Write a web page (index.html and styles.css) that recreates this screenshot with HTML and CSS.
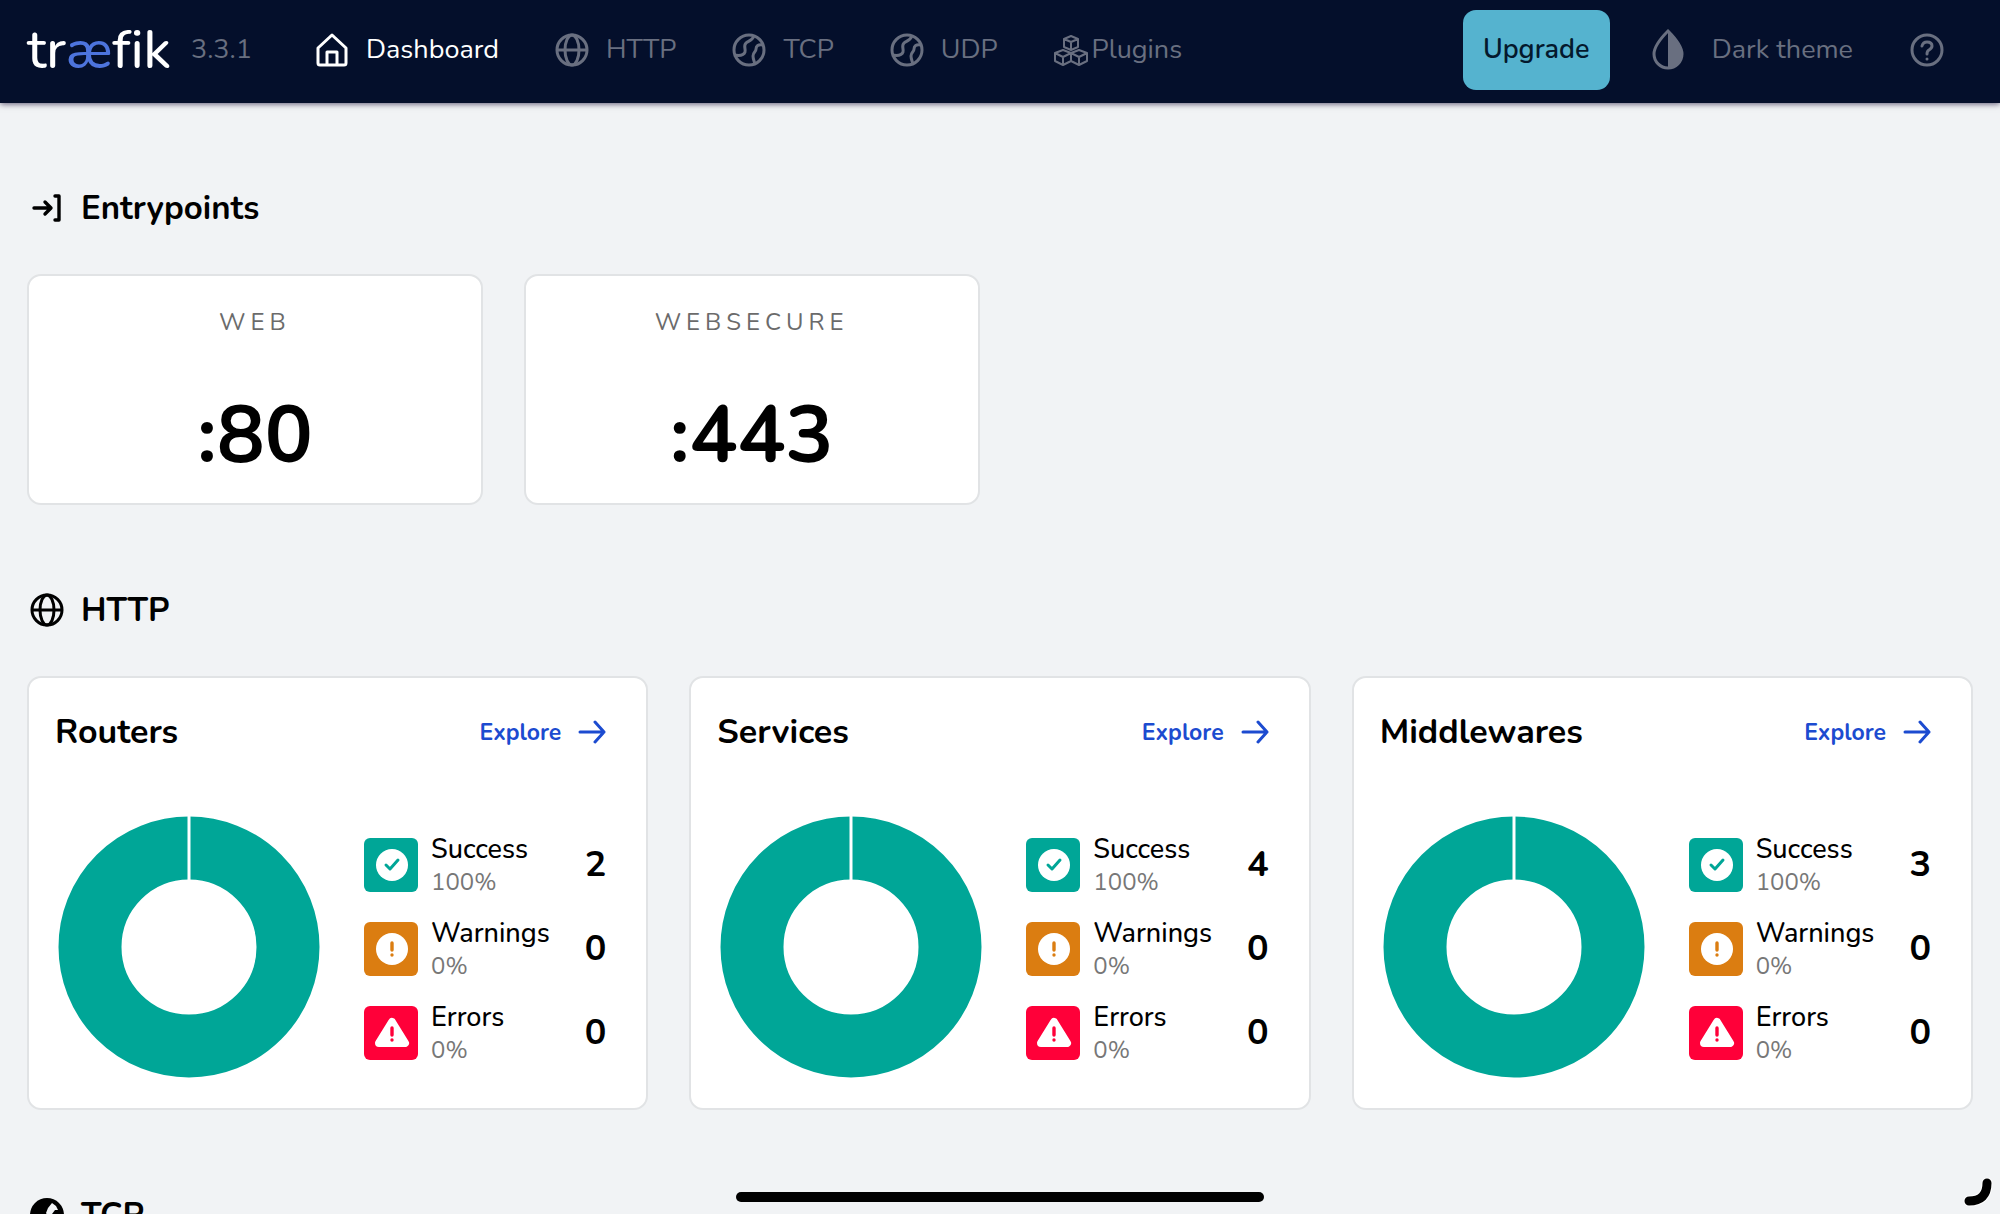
FILE: index.html
```html
<!DOCTYPE html>
<html lang="en">
<head>
<meta charset="utf-8">
<title>Traefik</title>
<link rel="stylesheet" href="styles.css">
</head>
<body>
<svg class="sprite" aria-hidden="true">
  <symbol id="globe" viewBox="0 0 34 34"><g fill="none" stroke="currentColor" stroke-width="3"><circle cx="17" cy="17" r="15"/><ellipse cx="17" cy="17" rx="7" ry="15"/><path d="M2 17H32"/></g></symbol>
  <symbol id="earth" viewBox="0 0 34 34"><g fill="none" stroke="currentColor" stroke-width="3" stroke-linejoin="round"><circle cx="17" cy="17" r="15"/><path d="M2 22C8 23 12 22 13 19C14 16 11 13 14 10C16 8 20 8 22 3M31 12C26 11 24 13 24 16C24 19 21 19 21 23C21 26 22 28 23 31"/></g></symbol>
  <symbol id="earth-solid" viewBox="0 0 34 34"><circle cx="17" cy="17" r="17" fill="currentColor"/><path d="M22 5L26 8L28 12H25L22 16L19 20L16 15L18 10Z" fill="#f1f3f5"/></symbol>
  <symbol id="arrow" viewBox="0 0 28 24"><path d="M2 12H26M17 2L26 12L17 22" fill="none" stroke="currentColor" stroke-width="3" stroke-linecap="round" stroke-linejoin="round"/></symbol>
  <symbol id="check" viewBox="0 0 54 54"><circle cx="28" cy="27" r="16" fill="#fff"/><path d="M22 27L26 31L34 22" fill="none" stroke="currentColor" stroke-width="3" stroke-linecap="round" stroke-linejoin="round"/></symbol>
  <symbol id="warn" viewBox="0 0 54 54"><circle cx="28" cy="27" r="16" fill="#fff"/><path d="M28 21V28M28 33V33.1" fill="none" stroke="currentColor" stroke-width="3.4" stroke-linecap="round"/></symbol>
  <symbol id="error" viewBox="0 0 54 54"><path d="M28 16L41 37H15Z" fill="#fff" stroke="#fff" stroke-width="8" stroke-linejoin="round"/><path d="M28 22V29M28 34V34.1" fill="none" stroke="currentColor" stroke-width="3.4" stroke-linecap="round"/></symbol>
</svg>
<header class="topbar">
  <a class="logo" href="#">tr<span class="logo-ae">æ</span>fik</a>
  <span class="version">3.3.1</span>
  <nav class="nav">
    <a class="nav-link active" href="#"><svg width="34" height="34" viewBox="0 0 34 34" fill="none" stroke="currentColor" stroke-width="3" stroke-linejoin="round"><path d="M3 15L17 2L31 15V30Q31 32 29 32H5Q3 32 3 30ZM12 32V19H22V32"/></svg>Dashboard</a>
    <a class="nav-link" href="#"><svg width="34" height="34"><use href="#globe"/></svg>HTTP</a>
    <a class="nav-link" href="#"><svg width="34" height="34"><use href="#earth"/></svg>TCP</a>
    <a class="nav-link" href="#"><svg width="34" height="34"><use href="#earth"/></svg>UDP</a>
    <a class="nav-link plugins" href="#"><svg width="34" height="34" viewBox="0 0 34 34" fill="none" stroke="currentColor" stroke-width="2" stroke-linejoin="round"><path d="M17 3L24 6V14L17 17L10 14V6ZM10 6L17 9L24 6M17 9V17M9 17L17 20V28L9 32L1 28V20ZM1 20L9 24L17 20M9 24V32M25 17L33 20V28L25 32L17 28V20ZM17 20L25 24L33 20M25 24V32"/></svg>Plugins</a>
  </nav>
  <button class="upgrade" type="button">Upgrade</button>
  <button class="theme" type="button"><svg width="32" height="44" viewBox="0 0 32 44"><path d="M16 3Q30 17 30 26A14 14 0 0 1 2 26Q2 17 16 3Z" fill="none" stroke="currentColor" stroke-width="3"/><path d="M16 3Q30 17 30 26A14 14 0 0 1 16 40Z" fill="currentColor"/></svg>Dark theme</button>
  <button class="help" type="button" aria-label="Help"><svg width="34" height="34" viewBox="0 0 34 34" fill="none" stroke="currentColor" stroke-width="3" stroke-linecap="round"><circle cx="17" cy="17" r="15"/><path d="M12 13Q13 9 17 9Q22 9 22 13Q22 15 19 17Q17 18 17 21M17 26V26.1"/></svg></button>
</header>
<main class="page">
  <section>
    <h2 class="section-title"><svg width="34" height="34" viewBox="0 0 34 34" fill="none" stroke="currentColor" stroke-width="3.4" stroke-linecap="round" stroke-linejoin="round"><path d="M4 17H20M15 11L21 17L15 23M25 5H29V29H25"/></svg>Entrypoints</h2>
    <div class="grid entry-grid">
      <article class="card entry"><h3 class="entry-name">WEB</h3><p class="entry-port">:80</p></article>
      <article class="card entry"><h3 class="entry-name">WEBSECURE</h3><p class="entry-port">:443</p></article>
    </div>
  </section>
  <section>
    <h2 class="section-title"><svg width="34" height="34"><use href="#globe"/></svg>HTTP</h2>
    <div class="grid stat-grid">
      <article class="card stat">
        <header class="stat-head"><h3 class="stat-title">Routers</h3><a class="explore" href="#">Explore<svg width="28" height="24"><use href="#arrow"/></svg></a></header>
        <div class="stat-body">
          <svg class="donut" viewBox="0 0 262 262"><circle cx="131" cy="131" r="99" fill="none" stroke="#00a697" stroke-width="63"/><path d="M131 0V66" stroke="#fff" stroke-width="3"/></svg>
          <ul class="legend">
            <li class="row"><svg class="badge success"><use href="#check"/></svg><span class="label">Success<small class="percent">100%</small></span><b class="count">2</b></li>
            <li class="row"><svg class="badge warning"><use href="#warn"/></svg><span class="label">Warnings<small class="percent">0%</small></span><b class="count">0</b></li>
            <li class="row"><svg class="badge danger"><use href="#error"/></svg><span class="label">Errors<small class="percent">0%</small></span><b class="count">0</b></li>
          </ul>
        </div>
      </article>
      <article class="card stat">
        <header class="stat-head"><h3 class="stat-title">Services</h3><a class="explore" href="#">Explore<svg width="28" height="24"><use href="#arrow"/></svg></a></header>
        <div class="stat-body">
          <svg class="donut" viewBox="0 0 262 262"><circle cx="131" cy="131" r="99" fill="none" stroke="#00a697" stroke-width="63"/><path d="M131 0V66" stroke="#fff" stroke-width="3"/></svg>
          <ul class="legend">
            <li class="row"><svg class="badge success"><use href="#check"/></svg><span class="label">Success<small class="percent">100%</small></span><b class="count">4</b></li>
            <li class="row"><svg class="badge warning"><use href="#warn"/></svg><span class="label">Warnings<small class="percent">0%</small></span><b class="count">0</b></li>
            <li class="row"><svg class="badge danger"><use href="#error"/></svg><span class="label">Errors<small class="percent">0%</small></span><b class="count">0</b></li>
          </ul>
        </div>
      </article>
      <article class="card stat">
        <header class="stat-head"><h3 class="stat-title">Middlewares</h3><a class="explore" href="#">Explore<svg width="28" height="24"><use href="#arrow"/></svg></a></header>
        <div class="stat-body">
          <svg class="donut" viewBox="0 0 262 262"><circle cx="131" cy="131" r="99" fill="none" stroke="#00a697" stroke-width="63"/><path d="M131 0V66" stroke="#fff" stroke-width="3"/></svg>
          <ul class="legend">
            <li class="row"><svg class="badge success"><use href="#check"/></svg><span class="label">Success<small class="percent">100%</small></span><b class="count">3</b></li>
            <li class="row"><svg class="badge warning"><use href="#warn"/></svg><span class="label">Warnings<small class="percent">0%</small></span><b class="count">0</b></li>
            <li class="row"><svg class="badge danger"><use href="#error"/></svg><span class="label">Errors<small class="percent">0%</small></span><b class="count">0</b></li>
          </ul>
        </div>
      </article>
    </div>
  </section>
  <section>
    <h2 class="section-title"><svg width="34" height="34"><use href="#earth-solid"/></svg>TCP</h2>
  </section>
</main>
<div class="home-bar"></div>
<svg class="corner" width="32" height="32" viewBox="0 0 32 32"><path d="M24 6Q24 24 6 24" fill="none" stroke="#fff" stroke-width="11" stroke-linecap="round"/><path d="M24 6Q24 24 6 24" fill="none" stroke="#000" stroke-width="9" stroke-linecap="round"/></svg>
</body>
</html>
```
FILE: styles.css
```css
* { box-sizing: border-box; margin: 0; padding: 0; }
html { height: 100%; overflow: hidden; }
body {
  height: 100%;
  overflow: hidden;
  background: #f1f3f5;
  color: #000;
  font-family: Nunito, "Open Sans", "Noto Sans", sans-serif;
  font-size: 27px;
}
a { color: inherit; text-decoration: none; }
button { border: 0; background: none; color: inherit; font: inherit; cursor: pointer; }
svg { flex: none; }
.sprite { position: absolute; width: 0; height: 0; }

.topbar {
  display: flex;
  align-items: center;
  height: 103px;
  padding: 0 56px 4px 27px;
  background: #040f2b;
  color: #696f80;
  box-shadow: 0 1px 6px rgba(30, 20, 60, 0.7);
  white-space: nowrap;
}
.logo {
  width: 164px;
  color: #fff;
  font-size: 54px;
  font-weight: 500;
  line-height: 64px;
  font-variant-ligatures: none;
}
.logo-ae { color: #4d74dd; }
.version { width: 124px; }
.nav { display: flex; flex: 1; gap: 56px; }
.nav-link { display: flex; align-items: center; gap: 17px; }
.nav-link.active { color: #fff; }
.nav-link.plugins { gap: 4px; }
.upgrade {
  width: 147px;
  height: 80px;
  border-radius: 13px;
  background: #55b3cf;
  color: #04192d;
  font-weight: 600;
}
.theme { display: flex; align-items: center; gap: 28px; margin-left: 42px; }
.help { display: flex; margin-left: 57px; }

.page { padding: 76px 27px 0; }
.section-title {
  display: flex;
  align-items: center;
  gap: 17px;
  height: 58px;
  margin-bottom: 37px;
  padding-left: 3px;
  font-size: 33px;
  font-weight: 700;
}
.grid { display: grid; gap: 41px; margin-bottom: 76px; }
.entry-grid { grid-template-columns: repeat(4, 1fr); }
.stat-grid { grid-template-columns: repeat(3, 1fr); }
.card { border: 2px solid #e1e3e5; border-radius: 14px; background: #fff; }
.entry {
  display: flex;
  flex-direction: column;
  align-items: center;
  gap: 48px;
  height: 231px;
  padding-top: 28px;
}
.entry-name { color: #6b6b6b; font-size: 24px; font-weight: 400; line-height: 36px; letter-spacing: 5px; }
.entry-port { font-size: 80px; font-weight: 700; line-height: 96px; }
.stat { height: 434px; padding: 27px 40px 0 26px; }
.stat-head { display: flex; align-items: center; justify-content: space-between; height: 54px; }
.stat-title { font-size: 34px; font-weight: 700; }
.explore { display: flex; align-items: center; gap: 17px; color: #1c4bd0; font-size: 23px; font-weight: 700; }
.stat-body { display: flex; align-items: center; gap: 44px; margin-top: 57px; padding-left: 3px; }
.donut { width: 262px; height: 262px; }
.legend { display: flex; flex: 1; flex-direction: column; gap: 30px; padding-top: 3px; list-style: none; }
.row { display: flex; align-items: center; gap: 13px; height: 54px; }
.badge { width: 54px; height: 54px; border-radius: 6px; }
.success { background: #00a697; color: #00a697; }
.warning { background: #db7d11; color: #db7d11; }
.danger { background: #ff0039; color: #ff0039; }
.label { display: flex; flex: 1; flex-direction: column; padding-top: 2px; font-weight: 500; line-height: 32px; }
.percent { color: #777; font-size: 24px; font-weight: 400; }
.count { font-size: 36px; font-weight: 700; }

.home-bar {
  position: fixed;
  bottom: 12px;
  left: 50%;
  width: 528px;
  height: 10px;
  margin-left: -264px;
  border-radius: 5px;
  background: #000;
}
.corner { position: fixed; right: 5px; bottom: 5px; }
```
